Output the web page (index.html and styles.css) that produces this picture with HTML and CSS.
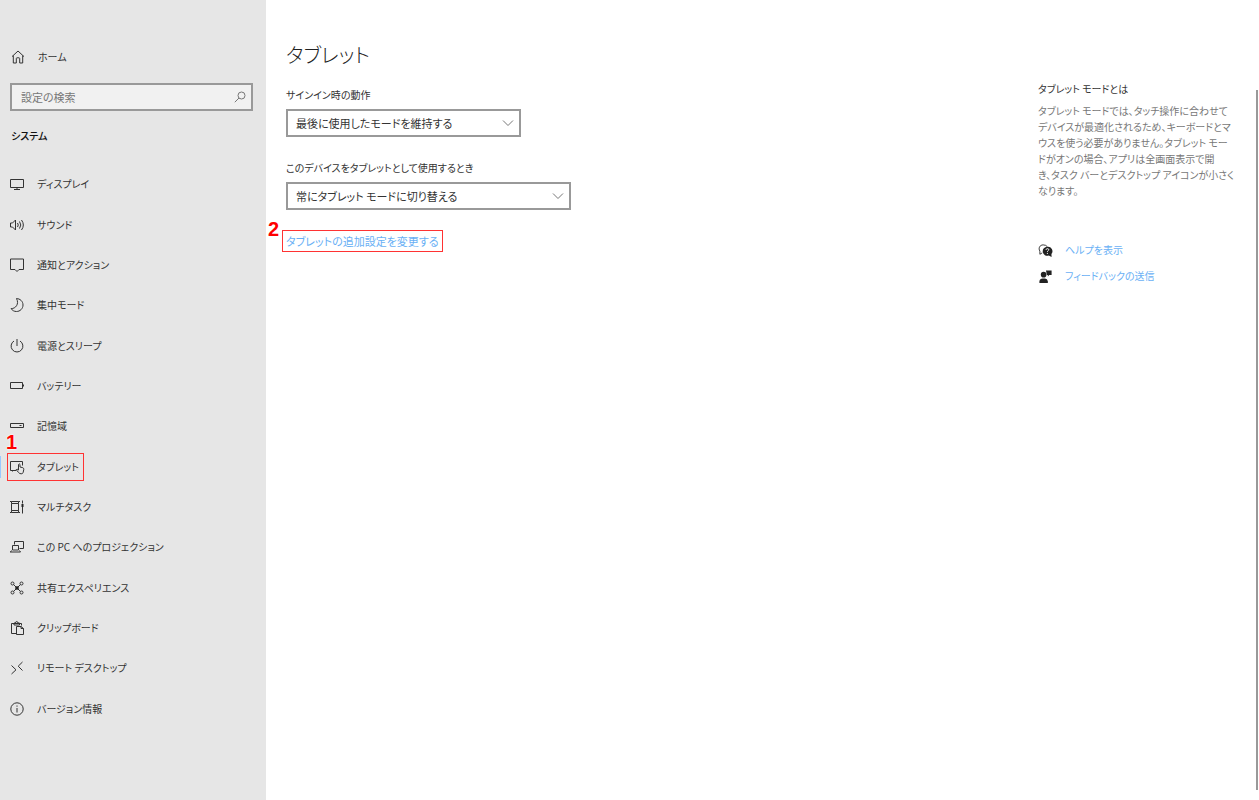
FILE: index.html
```
<!DOCTYPE html>
<html lang="ja">
<head>
<meta charset="utf-8">
<meta name="viewport" content="width=device-width, initial-scale=1">
<title>タブレット - 設定</title>
<link rel="stylesheet" href="styles.css">
</head>
<body>
<div class="window">
  <aside class="sidebar">
    <a class="home" href="#home">
      <svg class="icon" viewBox="0 0 16 16"><path d="M2 7.600 8 2l6 5.600M3.300 6.600V14h3V9.500q0-.7.700-.7h2q.7 0 .7.700V14h3V6.600"/></svg>
      <span>ホーム</span>
    </a>
    <form class="search">
      <input class="search-input" type="search" placeholder="設定の検索" aria-label="設定の検索">
      <button class="search-button" type="button" aria-label="検索"><svg class="search-icon" viewBox="0 0 12 12"><circle cx="7.500" cy="4.500" r="3.500"/><path d="M5 7 .8 11.200"/></svg></button>
    </form>
    <h2 class="group-title">システム</h2>
    <nav class="nav">
      <a class="nav-item" href="#display"><svg class="icon" viewBox="0 0 16 16"><path d="M1.500 3.500h13v8h-13zM8 11.500v2M5 13.500h6"/></svg><span>ディスプレイ</span></a>
      <a class="nav-item" href="#sound"><svg class="icon" viewBox="0 0 16 16"><path d="M1.500 6h2L6.500 3v10l-3-3h-2zM8.500 6q1.500 2 0 4M10.500 4.500q2.600 3.500 0 7M12.500 3q3.700 5 0 10"/></svg><span>サウンド</span></a>
      <a class="nav-item" href="#notifications"><svg class="icon" viewBox="0 0 16 16"><path d="M1.500 2h13v10.500H10L8 14.500l-2-2H1.500z"/></svg><span>通知とアクション</span></a>
      <a class="nav-item" href="#focus"><svg class="icon" viewBox="0 0 16 16"><path d="M7.500 1.500c3.500.2 6.500 2.700 6.500 6.500 0 3.700-3 6.500-6.500 6.500-2.300 0-4.200-1-5.400-2.900 4.400.2 8.400-4.600 5.400-10.100z"/></svg><span>集中モード</span></a>
      <a class="nav-item" href="#power"><svg class="icon" viewBox="0 0 16 16"><path d="M8 1v7M5 3a5.900 5.900 0 1 0 6 0"/></svg><span>電源とスリープ</span></a>
      <a class="nav-item" href="#battery"><svg class="icon" viewBox="0 0 16 16"><path d="M1.500 4.500h12v6h-12zM14.500 6.500v2"/></svg><span>バッテリー</span></a>
      <a class="nav-item" href="#storage"><svg class="icon" viewBox="0 0 16 16"><path d="M1.500 5.500h13v4h-13zM10.500 7.500h2"/></svg><span>記憶域</span></a>
      <a class="nav-item nav-item-current" href="#tablet" aria-current="page"><svg class="icon" viewBox="0 0 16 16"><path d="M7 11.500H1.500V2.500h12v4M4.500 11.500l-1 1M9.500 11V5.500q.8-1.300 1.500 0V8l2.800.7q1.100.4 1 1.600l-.6 3q-.4 1.500-2 1.500-1.700 0-2.600-1.300L7.200 10.700q.8-1.200 2.300.3"/></svg><span>タブレット</span><span class="step step-one">1</span></a>
      <a class="nav-item" href="#multitasking"><svg class="icon" viewBox="0 0 16 16"><path d="M2.500 4.500h7v7h-7zM1 2.500h1.500v2M11 2.500H9.500v2M1 13.500h1.500v-2M11 13.500H9.500v-2M2.500 2.500h7M2.500 13.500h7M13.500 1.500v3M13.500 8v6.500"/><path class="solid" d="M12.500 5h2v3h-2z"/></svg><span>マルチタスク</span></a>
      <a class="nav-item" href="#projection"><svg class="icon" viewBox="0 0 16 16"><path d="M5.500 5.500v-3h9v7h-4M3.500 6.500h6v4.500h-6zM1 13h10.500M2.500 11.500 1.500 13M10.500 11.500l1 1.500"/></svg><span>この PC へのプロジェクション</span></a>
      <a class="nav-item" href="#shared"><svg class="icon" viewBox="0 0 16 16"><circle cx="3.500" cy="3.500" r="1.500"/><circle cx="12.500" cy="3.500" r="1.500"/><circle cx="3.500" cy="12.500" r="1.500"/><circle cx="12.500" cy="12.500" r="1.500"/><path d="m4.600 4.600 6.800 6.800M11.400 4.600l-6.800 6.800"/><path class="solid" d="M6.300 6.300h3.400v3.400H6.300z"/></svg><span>共有エクスペリエンス</span></a>
      <a class="nav-item" href="#clipboard"><svg class="icon" viewBox="0 0 16 16"><path d="M7.500 13.500h-5v-10h10v2M5 5h5.500V3H9q-.2-1.500-1.300-1.500T6.500 3H5zM7.500 6.500h4.500l2.500 2v6h-7zM12 6.500v2h2.500"/></svg><span>クリップボード</span></a>
      <a class="nav-item" href="#remote"><svg class="icon" viewBox="0 0 16 16"><path d="m2.500 5.500 4.500 4.300-4.500 4.200M13.500 2 9.200 6.200l4.300 4.300"/></svg><span>リモート デスクトップ</span></a>
      <a class="nav-item" href="#about"><svg class="icon" viewBox="0 0 16 16"><circle cx="8" cy="8" r="6.200"/><path d="M8 7v4.500M8 4.500v1.200"/></svg><span>バージョン情報</span></a>
    </nav>
  </aside>
  <main class="content">
    <h1 class="page-title">タブレット</h1>
    <div class="field">
      <label class="label" for="signin">サインイン時の動作</label>
      <div class="select-box">
        <select class="select" id="signin"><option>最後に使用したモードを維持する</option></select>
        <svg class="chevron" viewBox="0 0 12 12"><path d="m1 3.500 5 5 5-5"/></svg>
      </div>
    </div>
    <div class="field">
      <label class="label" for="device">このデバイスをタブレットとして使用するとき</label>
      <div class="select-box select-box-wide">
        <select class="select" id="device"><option>常にタブレット モードに切り替える</option></select>
        <svg class="chevron" viewBox="0 0 12 12"><path d="m1 3.500 5 5 5-5"/></svg>
      </div>
    </div>
    <a class="extra-link" href="#more">タブレットの追加設定を変更する<span class="step step-two">2</span></a>
  </main>
  <aside class="about">
    <h2 class="about-title">タブレット モードとは</h2>
    <p class="about-text">タブレット モードでは、タッチ操作に合わせて<br>デバイスが最適化されるため、キーボードとマ<br>ウスを使う必要がありません。タブレット モー<br>ドがオンの場合、アプリは全画面表示で開<br>き、タスク バーとデスクトップ アイコンが小さく<br>なります。</p>
    <a class="help" href="#help"><svg class="help-icon" viewBox="0 0 16 16"><path d="M4.500 10.500 2 12V8.700C0 5.500 2 2 5.500 2q3 0 4.500 2"/><path class="solid" d="M10 4a4.800 4.800 0 1 0 1.500 9.300L14.500 15l-.2-3.200A4.800 4.800 0 0 0 10 4z"/><path class="mark" d="M8.500 7.300q.2-1.300 1.500-1.300 1.500 0 1.500 1.200c0 1-1.500 1-1.500 2.300M10 10.600v1.100"/></svg><span>ヘルプを表示</span></a>
    <a class="help" href="#feedback"><svg class="help-icon" viewBox="0 0 16 16"><circle class="solid" cx="6" cy="6" r="3"/><path class="solid" d="M1.500 15v-2q.5-3 3.500-3h2.500q2.500.3 3 3v2zM8.500 1.500h6v5H12L10.500 8V6.500h-1z"/></svg><span>フィードバックの送信</span></a>
  </aside>
  <div class="scrollbar"></div>
</div>
</body>
</html>
```

FILE: styles.css
```
* {
  box-sizing: border-box;
}

body {
  margin: 0;
  background: #fff;
  color: #333;
  font-family: "Noto Sans CJK JP", sans-serif;
  font-size: 10px;
  line-height: 16px;
  font-feature-settings: "palt";
}

h1, h2, p {
  margin: 0;
}

a {
  text-decoration: none;
}

svg {
  fill: none;
  stroke: #333;
  flex: none;
}

.solid {
  fill: #222;
  stroke: none;
}

.window {
  display: flex;
  min-height: 100vh;
}

.sidebar {
  display: flex;
  flex-direction: column;
  flex: none;
  width: 266px;
  padding: 48px 0 71px;
  background: #e6e6e6;
}

.icon {
  width: 16px;
  height: 16px;
}

.home {
  display: flex;
  align-items: center;
  gap: 12px;
  height: 18px;
  padding-left: 10px;
  color: #333;
}

.search {
  display: flex;
  align-items: center;
  height: 28px;
  margin: 17px 13px 0 10px;
  border: 2px solid #999;
  background: #f1f1f1;
}

.search-input {
  flex: 1;
  min-width: 0;
  padding: 0 0 0 9px;
  border: 0;
  outline: 0;
  background: none;
  font: inherit;
  font-size: 11px;
  font-feature-settings: inherit;
}

.search-input::placeholder {
  color: #777;
}

.search-button {
  display: flex;
  padding: 0 5px;
  border: 0;
  background: none;
}

.search-icon {
  width: 12px;
  height: 12px;
  stroke: #777;
}

.group-title {
  margin: 17px 0 20px 11px;
  color: #111;
  font-size: 10px;
  font-weight: 500;
}

.nav {
  display: grid;
  grid-auto-rows: 1fr;
  flex: 1;
}

.nav-item {
  position: relative;
  display: flex;
  align-items: center;
  gap: 12px;
  padding-left: 9px;
  color: #333;
}

.nav-item-current {
  align-self: center;
  justify-self: start;
  height: 28px;
  margin-left: 7px;
  padding: 0 4px 0 1px;
  border: 1px solid #f33;
}

.nav-item-current::before {
  content: "";
  position: absolute;
  left: -8px;
  top: 2px;
  width: 1px;
  height: 22px;
  background: #99c9ff;
}

.step {
  position: absolute;
  color: #f00;
  font-family: "Liberation Sans", Arial, sans-serif;
  font-size: 20px;
  font-weight: 700;
  line-height: 20px;
  text-shadow: 0 0 2px #fff, 0 0 2px #fff;
}

.step-one {
  left: -2px;
  top: -22px;
}

.step-two {
  left: -15px;
  top: -12px;
}

.content {
  flex: 1;
  padding: 40px 20px 20px;
}

.page-title {
  margin-bottom: 17px;
  color: #222;
  font-size: 20px;
  font-weight: 300;
  line-height: 30px;
}

.field {
  margin-bottom: 23px;
}

.label {
  display: block;
  margin-bottom: 6px;
}

.select-box {
  position: relative;
  max-width: 235px;
}

.select-box-wide {
  max-width: 285px;
}

.select {
  display: block;
  width: 100%;
  height: 28px;
  padding: 0 28px 0 8px;
  border: 2px solid #999;
  border-radius: 0;
  background: #fff;
  color: #333;
  font: inherit;
  font-size: 11px;
  font-feature-settings: inherit;
  appearance: none;
}

.chevron {
  position: absolute;
  right: 7px;
  top: 8px;
  width: 12px;
  height: 12px;
  stroke: #777;
  pointer-events: none;
}

.extra-link {
  position: relative;
  display: inline-block;
  margin: -3px 0 0 -4px;
  padding: 2px 3px;
  border: 1px solid #f33;
  color: #69b0f5;
  font-size: 11px;
}

.about {
  flex: none;
  width: 218px;
  padding-top: 81px;
  white-space: nowrap;
}

.about-title {
  margin-bottom: 6px;
  font-size: 10px;
  font-weight: 400;
}

.about-text {
  margin-bottom: 38px;
  color: #777;
}

.help {
  display: flex;
  align-items: center;
  gap: 12px;
  height: 26px;
  color: #69b0f5;
}

.help-icon {
  width: 15px;
  height: 15px;
}

.mark {
  stroke: #fff;
}

.scrollbar {
  flex: none;
  width: 2px;
  margin: 90px 1px 10px 0;
  background: #999;
}
```
